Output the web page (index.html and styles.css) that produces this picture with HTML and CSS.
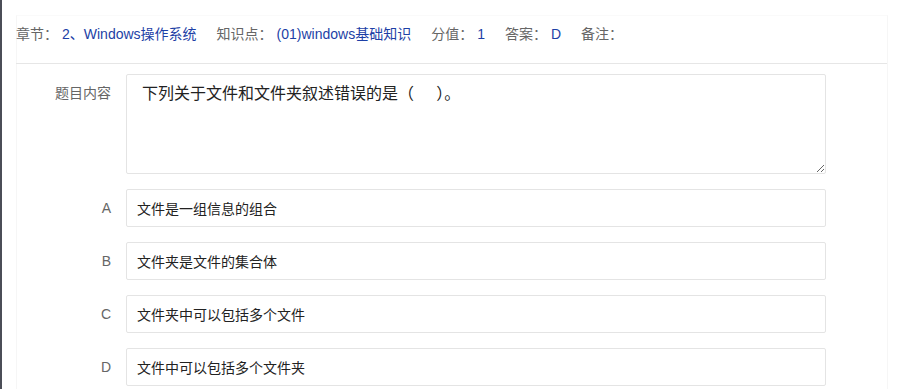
FILE: index.html
```html
<!DOCTYPE html>
<html lang="zh-CN">
<head>
    <meta charset="UTF-8">
    <meta name="viewport" content="width=device-width, initial-scale=1.0">
    <title>题目详情</title>
    <link rel="stylesheet" href="styles.css">
</head>
<body>
    <div class="side-bar"></div>
    <div class="panel">
        <!-- Question meta -->
        <div class="meta">
            <span class="meta-item"><span class="meta-label">章节：</span><span class="meta-value">2、Windows操作系统</span></span>
            <span class="meta-item"><span class="meta-label">知识点：</span><span class="meta-value">(01)windows基础知识</span></span>
            <span class="meta-item"><span class="meta-label">分值：</span><span class="meta-value">1</span></span>
            <span class="meta-item"><span class="meta-label">答案：</span><span class="meta-value">D</span></span>
            <span class="meta-item"><span class="meta-label">备注：</span></span>
        </div>

        <!-- Question form -->
        <div class="form">
            <div class="form-row">
                <label class="form-label label-top">题目内容</label>
                <textarea class="question-text">下列关于文件和文件夹叙述错误的是（     ）。</textarea>
            </div>
            <div class="form-row">
                <label class="form-label">A</label>
                <input type="text" class="option-input" value="文件是一组信息的组合">
            </div>
            <div class="form-row">
                <label class="form-label">B</label>
                <input type="text" class="option-input" value="文件夹是文件的集合体">
            </div>
            <div class="form-row">
                <label class="form-label">C</label>
                <input type="text" class="option-input" value="文件夹中可以包括多个文件">
            </div>
            <div class="form-row">
                <label class="form-label">D</label>
                <input type="text" class="option-input" value="文件中可以包括多个文件夹">
            </div>
        </div>
    </div>
</body>
</html>
```

FILE: styles.css
```css
body {
    font-family: "Liberation Sans", "Noto Sans CJK SC", sans-serif;
    background-color: #fff;
    margin: 0;
    padding: 0;
    display: flex;
    min-height: 389px;
    overflow: hidden;
}

.side-bar {
    width: 2px;
    background-color: #4b4e57;
    flex-shrink: 0;
}

.panel {
    margin: 15px 0 0 14px;
    width: 870px;
    border-left: 1px solid #f6f6f6;
    border-right: 1px solid #f6f6f6;
    border-top: 1px solid #fafafa;
}

.meta {
    display: flex;
    gap: 20px;
    height: 48px;
    box-sizing: border-box;
    padding-top: 8px;
    line-height: 20px;
    font-size: 14px;
    border-bottom: 1px solid #e6e6e6;
    margin-left: -1px;
}

.meta-label {
    color: #666;
    margin-right: 4px;
}

.meta-value {
    color: #1d3fa6;
}

.form {
    padding-top: 10px;
    display: flex;
    flex-direction: column;
    gap: 15px;
}

.form-row {
    display: flex;
    align-items: center;
}

.form-row:first-child {
    align-items: flex-start;
}

.form-label {
    width: 94px;
    padding-right: 15px;
    text-align: right;
    font-size: 14px;
    color: #666;
}

.label-top {
    padding-top: 8px;
}

.question-text {
    width: 700px;
    height: 100px;
    box-sizing: border-box;
    border: 1px solid #e4e4e4;
    border-radius: 2px;
    padding: 5px 15px;
    font-size: 16px;
    font-family: "Liberation Sans", "Noto Sans CJK SC", sans-serif;
    color: #222;
    resize: vertical;
    outline: none;
}

.option-input {
    width: 700px;
    height: 38px;
    box-sizing: border-box;
    border: 1px solid #e4e4e4;
    border-radius: 2px;
    padding: 0 10px;
    font-size: 14px;
    font-family: "Liberation Sans", "Noto Sans CJK SC", sans-serif;
    color: #222;
    outline: none;
}
```
